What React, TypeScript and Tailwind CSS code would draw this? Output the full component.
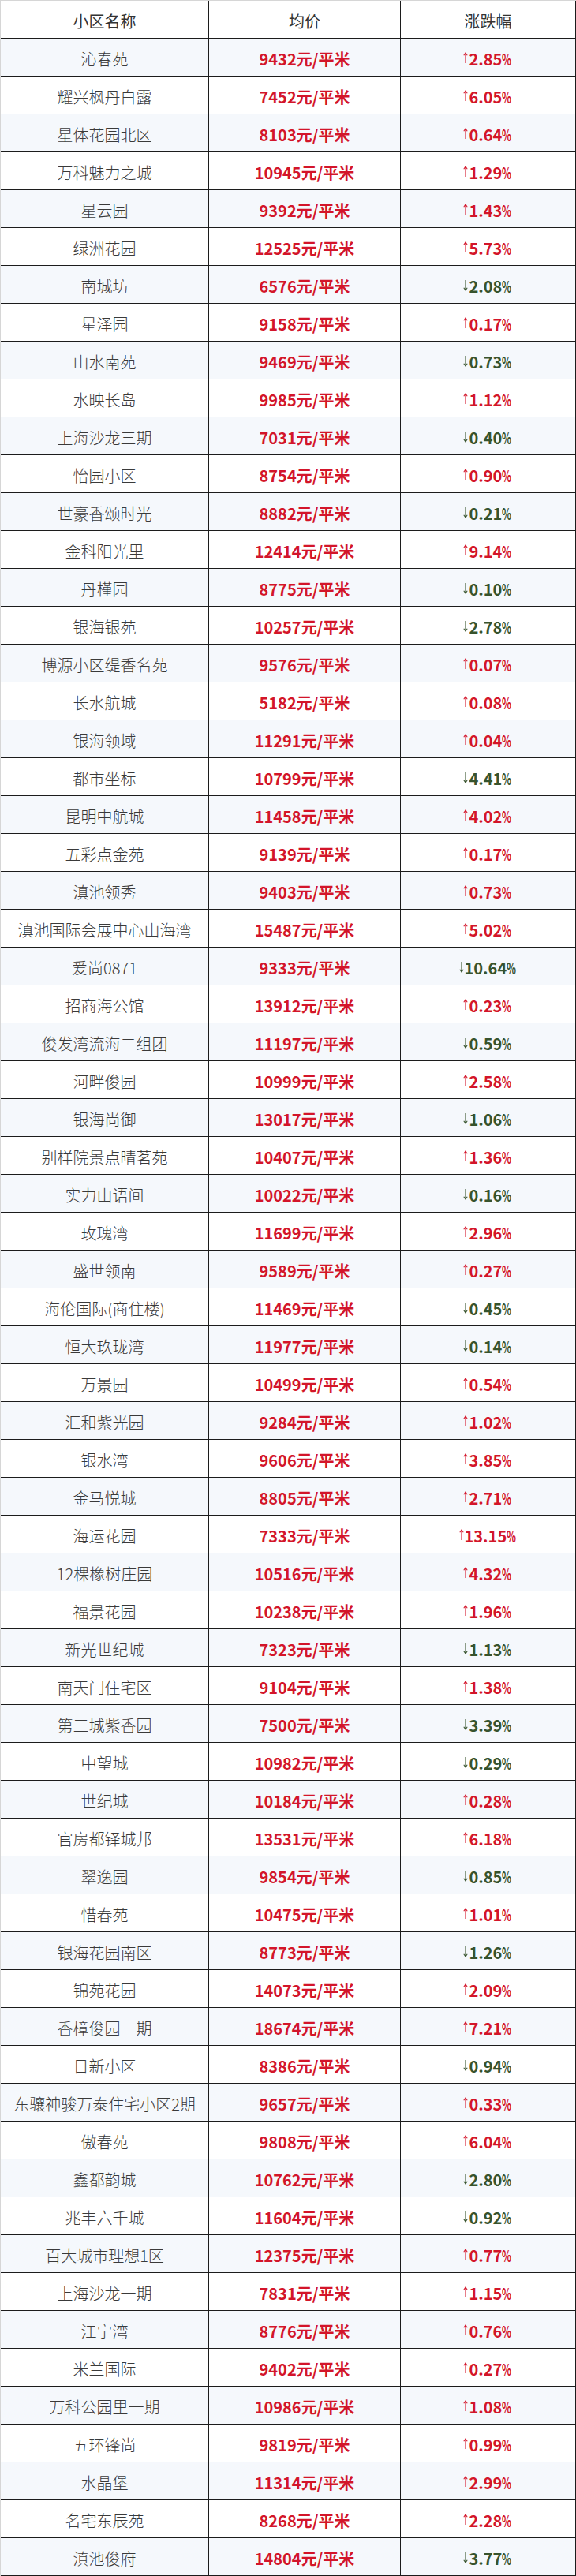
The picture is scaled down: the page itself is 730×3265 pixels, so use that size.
const rows: [string, number, number][] = [
  ["沁春苑", 9432, 2.85],
  ["耀兴枫丹白露", 7452, 6.05],
  ["星体花园北区", 8103, 0.64],
  ["万科魅力之城", 10945, 1.29],
  ["星云园", 9392, 1.43],
  ["绿洲花园", 12525, 5.73],
  ["南城坊", 6576, -2.08],
  ["星泽园", 9158, 0.17],
  ["山水南苑", 9469, -0.73],
  ["水映长岛", 9985, 1.12],
  ["上海沙龙三期", 7031, -0.4],
  ["怡园小区", 8754, 0.9],
  ["世豪香颂时光", 8882, -0.21],
  ["金科阳光里", 12414, 9.14],
  ["丹槿园", 8775, -0.1],
  ["银海银苑", 10257, -2.78],
  ["博源小区缇香名苑", 9576, 0.07],
  ["长水航城", 5182, 0.08],
  ["银海领域", 11291, 0.04],
  ["都市坐标", 10799, -4.41],
  ["昆明中航城", 11458, 4.02],
  ["五彩点金苑", 9139, 0.17],
  ["滇池领秀", 9403, 0.73],
  ["滇池国际会展中心山海湾", 15487, 5.02],
  ["爱尚0871", 9333, -10.64],
  ["招商海公馆", 13912, 0.23],
  ["俊发湾流海二组团", 11197, -0.59],
  ["河畔俊园", 10999, 2.58],
  ["银海尚御", 13017, -1.06],
  ["别样院景点晴茗苑", 10407, 1.36],
  ["实力山语间", 10022, -0.16],
  ["玫瑰湾", 11699, 2.96],
  ["盛世领南", 9589, 0.27],
  ["海伦国际(商住楼)", 11469, -0.45],
  ["恒大玖珑湾", 11977, -0.14],
  ["万景园", 10499, 0.54],
  ["汇和紫光园", 9284, 1.02],
  ["银水湾", 9606, 3.85],
  ["金马悦城", 8805, 2.71],
  ["海运花园", 7333, 13.15],
  ["12棵橡树庄园", 10516, 4.32],
  ["福景花园", 10238, 1.96],
  ["新光世纪城", 7323, -1.13],
  ["南天门住宅区", 9104, 1.38],
  ["第三城紫香园", 7500, -3.39],
  ["中望城", 10982, -0.29],
  ["世纪城", 10184, 0.28],
  ["官房都铎城邦", 13531, 6.18],
  ["翠逸园", 9854, -0.85],
  ["惜春苑", 10475, 1.01],
  ["银海花园南区", 8773, -1.26],
  ["锦苑花园", 14073, 2.09],
  ["香樟俊园一期", 18674, 7.21],
  ["日新小区", 8386, -0.94],
  ["东骧神骏万泰住宅小区2期", 9657, 0.33],
  ["傲春苑", 9808, 6.04],
  ["鑫都韵城", 10762, -2.8],
  ["兆丰六千城", 11604, -0.92],
  ["百大城市理想1区", 12375, 0.77],
  ["上海沙龙一期", 7831, 1.15],
  ["江宁湾", 8776, 0.76],
  ["米兰国际", 9402, 0.27],
  ["万科公园里一期", 10986, 1.08],
  ["五环锋尚", 9819, 0.99],
  ["水晶堡", 11314, 2.99],
  ["名宅东辰苑", 8268, 2.28],
  ["滇池俊府", 14804, -3.77],
];

function Arrow({ up }: { up: boolean }) {
  return (
    <svg width="6" height="15" viewBox="0 0 6 15" className="mr-[1px] -mt-[2px]">
      {up ? (
        <path d="M3 14V1M0.8 4.2L3 1L5.2 4.2" fill="none" stroke="currentColor" strokeWidth="1.1" />
      ) : (
        <path d="M3 1V14M0.8 10.8L3 14L5.2 10.8" fill="none" stroke="currentColor" strokeWidth="1.1" />
      )}
    </svg>
  );
}

function Change({ value }: { value: number }) {
  const up = value >= 0;
  return (
    <span
      className={`flex items-center font-semibold ${up ? "text-[#d3152a]" : "text-[#37532d]"}`}
    >
      <Arrow up={up} />
      {Math.abs(value).toFixed(2)}
      <span className="inline-block origin-left scale-x-[0.62] -mr-[6px]">%</span>
    </span>
  );
}

export default function App() {
  return (
    <div
      className="w-[730px] bg-white text-[20px] leading-none"
      style={{ fontFamily: '"Noto Sans CJK SC", "Noto Sans", sans-serif' }}
    >
      <div className="border-t border-l border-[#d6d6d6]">
        {/* header */}
        <div className="grid h-[48px] grid-cols-[264px_243px_1fr] border-b border-[#1c1c1c] text-[#333]">
          <div className="flex items-center justify-center border-r border-[#1c1c1c] pt-1">小区名称</div>
          <div className="flex items-center justify-center border-r border-[#1c1c1c] pt-1">均价</div>
          <div className="flex items-center justify-center border-r border-[#1c1c1c] pt-1">涨跌幅</div>
        </div>

        {rows.map(([name, price, change], i) => (
          <div
            key={name}
            className={`grid h-[48px] grid-cols-[264px_243px_1fr] border-b border-[#1c1c1c] ${
              i % 2 === 0 ? "bg-[#f5f8fc]" : "bg-white"
            }`}
          >
            <div className="flex items-center justify-center border-r border-[#1c1c1c] pt-1 font-light text-[#3a3a3a]">
              {name}
            </div>
            <div className="flex items-center justify-center border-r border-[#1c1c1c] pt-1 font-semibold text-[#d3152a]">
              {price}元/平米
            </div>
            <div className="flex items-center justify-center border-r border-[#1c1c1c] pt-1">
              <Change value={change} />
            </div>
          </div>
        ))}
      </div>
    </div>
  );
}
